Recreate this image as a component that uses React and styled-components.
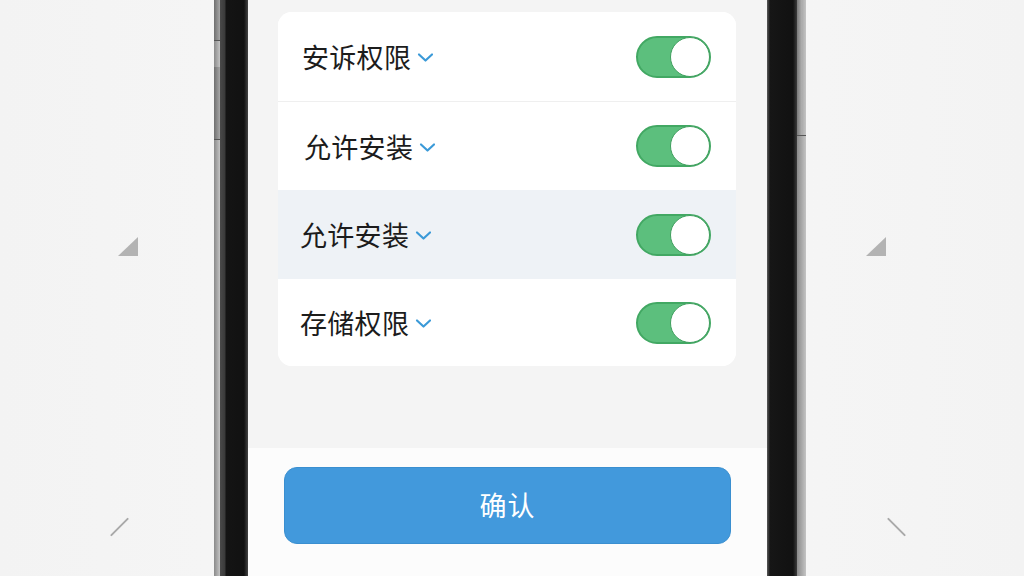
import React from "react";
import styled, { createGlobalStyle } from "styled-components";

const GlobalStyle = createGlobalStyle`
  html, body {
    margin: 0;
    padding: 0;
    background: #f5f5f5;
  }
  body {
    font-family: "Noto Sans CJK SC", "Noto Sans", sans-serif;
  }
`;

const Page = styled.div`
  width: 1024px;
  height: 576px;
  display: flex;
  overflow: hidden;
  background: linear-gradient(90deg, #f3f3f3 0%, #f8f8f8 50%, #f3f3f3 100%);
`;

const Side = styled.div`
  width: ${(p) => p.$width}px;
  display: flex;
  flex-direction: column;
  align-items: ${(p) => (p.$right ? "flex-start" : "flex-end")};
  padding: 237px ${(p) => (p.$right ? 0 : 76)}px 0 ${(p) => (p.$right ? 60 : 0)}px;
  box-sizing: border-box;
`;

const Triangle = styled.div`
  width: 0;
  height: 0;
  border-left: 20px solid transparent;
  border-bottom: 19px solid #b3b3b3;
`;

const Stroke = styled.div`
  width: 25px;
  height: 2px;
  background: #a9a9a9;
  border-radius: 1px;
  margin-top: 270px;
  margin-left: ${(p) => p.$shift}px;
  margin-right: ${(p) => p.$pull}px;
  transform: rotate(${(p) => p.$angle}deg);
`;

const Rail = styled.div`
  width: ${(p) => p.$width}px;
  display: flex;
  flex-direction: column;
  background: linear-gradient(90deg, #8a8a8a, #c4c4c4);
`;

const RailButton = styled.div`
  height: ${(p) => p.$height}px;
  margin-bottom: ${(p) => p.$gap}px;
  background: linear-gradient(90deg, #6f6f6f, #a8a8a8);
  border-bottom: 1px solid #555;
`;

const Bezel = styled.div`
  width: ${(p) => p.$width}px;
  background: ${(p) =>
    p.$right
      ? "linear-gradient(90deg, #5a5a5a 0px, #161616 3px, #111 26px, #3c3c3c 30px)"
      : "linear-gradient(90deg, #4a4a4a 0px, #3a3a3a 5px, #141414 6px, #111 24px, #444 28px)"};
`;

const Screen = styled.div`
  width: 519px;
  display: flex;
  flex-direction: column;
  background: #f4f4f4;
`;

const Content = styled.div`
  height: 448px;
  padding: 12px 31px 0 30px;
  box-sizing: border-box;
`;

const Card = styled.div`
  background: #ffffff;
  border-radius: 14px;
  overflow: hidden;
`;

const Row = styled.div`
  height: ${(p) => p.$height}px;
  display: flex;
  align-items: center;
  justify-content: space-between;
  padding: 0 25px 0 ${(p) => p.$indent}px;
  background: ${(p) => (p.$active ? "#eef2f6" : "#ffffff")};
  border-top: ${(p) => (p.$divider ? "1px solid #efefef" : "none")};
  box-sizing: border-box;
`;

const Label = styled.div`
  display: flex;
  align-items: center;
  gap: 6px;
  font-size: 27px;
  color: #1c1c1c;
  letter-spacing: 0.3px;
`;

const Chevron = styled.svg`
  width: 17px;
  height: 11px;
  margin-top: 2px;
`;

const Toggle = styled.div`
  width: 75px;
  height: 42px;
  border-radius: 21px;
  background: #5cbf7d;
  border: 2px solid #42a863;
  box-sizing: border-box;
  display: flex;
  justify-content: flex-end;
  align-items: center;
`;

const Knob = styled.div`
  width: 40px;
  height: 40px;
  border-radius: 50%;
  background: #ffffff;
  border: 1.5px solid #3f9f5e;
  box-sizing: border-box;
  margin-right: -1px;
`;

const Footer = styled.div`
  flex: 1;
  background: #fcfcfc;
  padding: 19px 36px 0 36px;
`;

const Confirm = styled.button`
  width: 447px;
  height: 77px;
  padding: 0 0 3px;
  border: 1px solid #3a8fd0;
  border-radius: 13px;
  background: #4299dc;
  color: #ffffff;
  font-family: "Noto Sans CJK SC", sans-serif;
  font-size: 27px;
  letter-spacing: 1px;
`;

const Arrow = () => (
  <Chevron viewBox="0 0 17 11">
    <path d="M2 2.5 L8.5 8.5 L15 2.5" fill="none" stroke="#3b9ad8" strokeWidth="2.2" strokeLinecap="round" strokeLinejoin="round" />
  </Chevron>
);

const rows = [
  { label: "安诉权限", indent: 24, height: 89 },
  { label: "允许安装", indent: 26, height: 89, divider: true },
  { label: "允许安装", indent: 22, height: 89, active: true },
  { label: "存储权限", indent: 22, height: 87 },
];

export default function App() {
  return (
    <>
      <GlobalStyle />
      <Page>
        <Side $width={214}>
          <Triangle />
          <Stroke $angle={-45} $shift={0} $pull={6} />
        </Side>
        <Rail $width={6}>
          <RailButton $height={40} $gap={26} />
          <RailButton $height={72} $gap={0} />
        </Rail>
        <Bezel $width={28} />
        <Screen>
          <Content>
            <Card>
              {rows.map((r, i) => (
                <Row key={i} $height={r.height} $indent={r.indent} $active={r.active} $divider={r.divider}>
                  <Label>
                    {r.label}
                    <Arrow />
                  </Label>
                  <Toggle>
                    <Knob />
                  </Toggle>
                </Row>
              ))}
            </Card>
          </Content>
          <Footer>
            <Confirm>确认</Confirm>
          </Footer>
        </Screen>
        <Bezel $width={30} $right />
        <Rail $width={9}>
          <RailButton $height={135} $gap={0} style={{ background: "linear-gradient(90deg,#7a7a7a,#b5b5b5 60%,transparent 60%)" }} />
        </Rail>
        <Side $width={218} $right>
          <Triangle />
          <Stroke $angle={45} $shift={18} $pull={0} />
        </Side>
      </Page>
    </>
  );
}
